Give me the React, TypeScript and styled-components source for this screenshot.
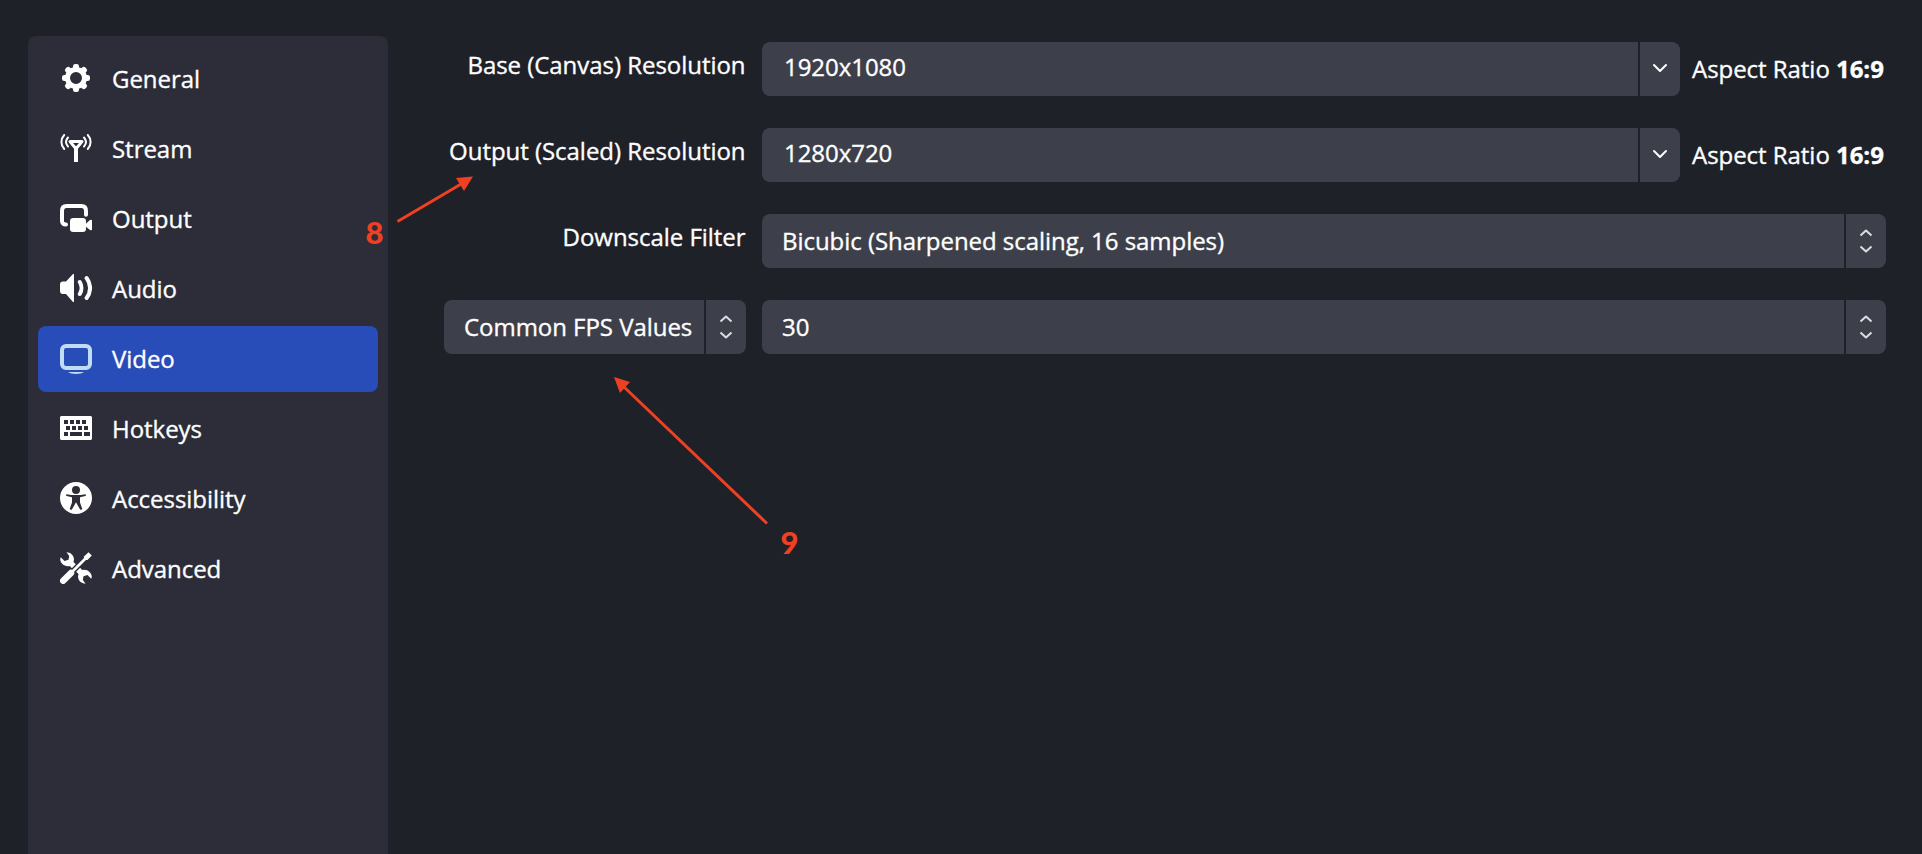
import React from "react";
import styled, { createGlobalStyle } from "styled-components";

const colors = {
  window: "#1f2129",
  panel: "#2c2d38",
  field: "#3d404a",
  selected: "#284cb8",
  text: "#fefefe",
  iconSelected: "#bfdcf2",
  mark: "#f04023",
};

const GlobalStyle = createGlobalStyle`
  * { box-sizing: border-box; }
  html, body { margin: 0; background: ${colors.window}; }
  body {
    overflow: hidden;
    color: ${colors.text};
    font-family: "Open Sans", "Noto Sans", sans-serif;
    font-size: 24px;
    line-height: 34px;
    letter-spacing: -0.04px;
    -webkit-text-stroke: 0.35px ${colors.text};
    white-space: nowrap;
  }
`;

const Window = styled.main`
  position: relative;
  display: flex;
  align-items: stretch;
  height: 854px;
  padding: 36px 36px 0 28px;
  overflow: hidden;
`;

const Sidebar = styled.nav`
  display: flex;
  flex-direction: column;
  gap: 4px;
  width: 360px;
  flex: none;
  padding: 10px;
  border-radius: 8px 8px 0 0;
  background: ${colors.panel};
`;

const NavItem = styled.a<{ $selected?: boolean }>`
  display: flex;
  align-items: center;
  gap: 20px;
  height: 66px;
  padding: 0 22px;
  border-radius: 8px;
  background: ${(p) => (p.$selected ? colors.selected : "transparent")};
`;

const NavIcon = styled.svg<{ $selected?: boolean }>`
  width: 32px;
  height: 32px;
  flex: none;
  margin-bottom: 2px;
  color: ${(p) => (p.$selected ? colors.iconSelected : colors.text)};
`;

const Form = styled.section`
  display: flex;
  flex-direction: column;
  gap: 32px;
  flex: 1;
  padding: 6px 0 0 56px;
`;

const Row = styled.div`
  display: flex;
  height: 54px;
`;

const LabelCell = styled.div`
  display: flex;
  justify-content: flex-end;
  width: 302px;
  margin-right: 16px;
  flex: none;
`;

const Label = styled.label`
  padding: 6px 0.5px 0 0;
`;

const Combo = styled.div`
  display: flex;
  gap: 2px;
  flex: 1;
`;

const Value = styled.div<{ $editable?: boolean }>`
  flex: 1;
  padding: ${(p) => (p.$editable ? "8px 0 0 22px" : "10px 0 0 20px")};
  border-radius: 8px 0 0 8px;
  background: ${colors.field};
`;

const ComboButton = styled.div`
  display: flex;
  align-items: center;
  justify-content: center;
  width: 40px;
  border-radius: 0 8px 8px 0;
  background: ${colors.field};
`;

const AspectRatio = styled.div`
  width: 206px;
  padding: 10px 0 0 12px;
  flex: none;
`;

const Marks = styled.svg`
  position: absolute;
  inset: 0;
  width: 1922px;
  height: 854px;
  pointer-events: none;
`;

const MarkNumber = styled.text`
  fill: ${colors.mark};
  font-family: Lato, sans-serif;
  font-size: 31px;
  font-weight: 900;
  -webkit-text-stroke: 0.5px ${colors.mark};
`;

const GearIcon = () => (
  <g fill="currentColor">
    <path
      fillRule="evenodd"
      d="M16 5a11 11 0 1 0 0 22a11 11 0 1 0 0-22zM16 10a6 6 0 1 1 0 12a6 6 0 1 1 0-12z"
    />
    {[0, 45, 90, 135, 180, 225, 270, 315].map((a) => (
      <rect key={a} x="13" y="2" width="6" height="6.5" rx="2.3" transform={`rotate(${a} 16 16)`} />
    ))}
  </g>
);

const AntennaIcon = () => (
  <g fill="none" stroke="currentColor">
    <path d="M10 9.6h12L16 16.8z" strokeWidth="3" strokeLinejoin="round" />
    <path d="M16 16v14" strokeWidth="4" />
    <path
      d="M4.2 3C.5 7 .5 13 4.2 17M8 5.5c-2.500 2.800-2.500 6.200 0 9M27.800 3c3.700 4 3.700 10 0 14M24 5.500c2.500 2.800 2.500 6.200 0 9"
      strokeWidth="2"
      strokeLinecap="round"
    />
  </g>
);

const OutputIcon = () => (
  <g transform="translate(0 2)">
    <path
      d="M6 20.500C3.200 20.500 2 19 2 17V7c0-3 1.500-5 4.500-5h15C24.500 2 26 4 26 7v3.800"
      fill="none"
      stroke="currentColor"
      strokeWidth="4"
      strokeLinecap="round"
    />
    <rect x="10" y="14" width="16" height="14" rx="3.200" fill="currentColor" />
    <path d="M25 20.500l5-4.500q2-.8 2 1v8q0 1.800-2 1l-5-4z" fill="currentColor" />
  </g>
);

const AudioIcon = () => (
  <g>
    <path d="M3 9.500h3L13 2h1v28h-1L6 22H3q-3 0-3-3v-6.500q0-3 3-3z" fill="currentColor" />
    <path
      d="M19.800 10c2.200 3.500 2.200 8.500 0 12M26.600 6c4.600 6 4.600 14 0 20"
      fill="none"
      stroke="currentColor"
      strokeWidth="4"
      strokeLinecap="round"
    />
  </g>
);

const DisplayIcon = () => (
  <g>
    <rect x="2" y="4" width="28" height="22" rx="4" fill="none" stroke="currentColor" strokeWidth="4" />
    <path d="M8 30h16c-3 2.600-13 2.600-16 0z" fill="currentColor" />
  </g>
);

const KeyboardIcon = () => (
  <path
    fill="currentColor"
    fillRule="evenodd"
    d="M1 4h30l1 1v22l-1 1H1l-1-1V5z
      M4 8v4h4V8zM10 8v4h4V8zM16 8v4h4V8zM22 8v4h4V8z
      M6 14v4h4v-4zM12 14v4h4v-4zM18 14v4h4v-4zM24 14v4h4v-4z
      M4 20v4h4v-4zM10 20v4h12v-4zM24 20v4h6v-4z"
  />
);

const PersonIcon = () => (
  <g>
    <circle cx="16" cy="16" r="16" fill="currentColor" />
    <circle cx="16" cy="8" r="4" fill={colors.panel} />
    <path
      d="M6.500 12.200Q16 14 25.500 12.200q1 1.300-.2 1.700L20 15.200v5.300l2.300 6.500q-1 1.400-2.200.4L16 20.200l-4.100 7.200q-1.200 1-2.200-.4l2.300-6.500v-5.300l-5.300-1.300q-1.200-.4-.2-1.700z"
      fill={colors.panel}
    />
  </g>
);

const ToolsIcon = () => (
  <g>
    <path
      d="M6.500.3C10 .2 14 3 14 7.400L13.500 10l4.500 4.500-4 4-4.200-4.600C5 15.200.2 11.500.2 7l.6-1.700L4.500 9l4-1.200L9.200 4z"
      fill="currentColor"
    />
    <path
      d="M25.500 31.700C22 31.800 18 29 18 24.600l.5-2.600-4.500-4.500 4-4 4.200 4.600c4.800-1.300 9.600 2.400 9.600 6.900l-.6 1.700-3.700-3.700-4 1.200-.7 3.800z"
      fill="currentColor"
    />
    <path d="M3.500 28.500L14 18 27 5" stroke={colors.panel} strokeWidth="5.500" fill="none" />
    <path d="M11 21L27 5" stroke="currentColor" strokeWidth="2.600" fill="none" />
    <path d="M3.200 28.800L11 21" stroke="currentColor" strokeWidth="6.400" strokeLinecap="round" />
    <path d="M24 4.500L28.500.2l3.300 3.300L27.500 8h-2.800l-.9-.8z" fill="currentColor" />
  </g>
);

const NAV: { label: string; Icon: React.FC; selected?: boolean }[] = [
  { label: "General", Icon: GearIcon },
  { label: "Stream", Icon: AntennaIcon },
  { label: "Output", Icon: OutputIcon },
  { label: "Audio", Icon: AudioIcon },
  { label: "Video", Icon: DisplayIcon, selected: true },
  { label: "Hotkeys", Icon: KeyboardIcon },
  { label: "Accessibility", Icon: PersonIcon },
  { label: "Advanced", Icon: ToolsIcon },
];

const DropdownArrow = () => (
  <svg width="16" height="54" viewBox="0 0 16 54" fill="none" stroke={colors.text} strokeWidth="2">
    <path d="M2 23l6 6 6-6" strokeLinecap="round" strokeLinejoin="round" />
  </svg>
);

const StepArrows = () => (
  <svg width="16" height="54" viewBox="0 0 16 54" fill="none" stroke="#dcdde0" strokeWidth="2">
    <path d="M2.500 21.500L8 16.500l5.500 5M2.500 32.500l5.500 5 5.500-5" strokeLinejoin="round" />
  </svg>
);

const Select = ({ value, editable }: { value: string; editable?: boolean }) => (
  <Combo>
    <Value $editable={editable}>{value}</Value>
    <ComboButton>{editable ? <DropdownArrow /> : <StepArrows />}</ComboButton>
  </Combo>
);

const ResolutionRow = ({ label, value }: { label: string; value: string }) => (
  <Row>
    <LabelCell>
      <Label>{label}</Label>
    </LabelCell>
    <Select value={value} editable />
    <AspectRatio>
      Aspect Ratio <b>16:9</b>
    </AspectRatio>
  </Row>
);

export default function App() {
  return (
    <Window>
      <GlobalStyle />
      <Sidebar>
        {NAV.map(({ label, Icon, selected }) => (
          <NavItem key={label} $selected={selected}>
            <NavIcon viewBox="0 0 32 32" $selected={selected}>
              <Icon />
            </NavIcon>
            {label}
          </NavItem>
        ))}
      </Sidebar>
      <Form>
        <ResolutionRow label="Base (Canvas) Resolution" value="1920x1080" />
        <ResolutionRow label="Output (Scaled) Resolution" value="1280x720" />
        <Row>
          <LabelCell>
            <Label>Downscale Filter</Label>
          </LabelCell>
          <Select value="Bicubic (Sharpened scaling, 16 samples)" />
        </Row>
        <Row>
          <LabelCell>
            <Select value="Common FPS Values" />
          </LabelCell>
          <Select value="30" />
        </Row>
      </Form>
      <Marks viewBox="0 0 1922 854">
        <g stroke={colors.mark} strokeWidth="3">
          <path d="M397.500 221.500L462 183.500M767 523.500L624 387" />
        </g>
        <g fill={colors.mark}>
          <path d="M473 176.500L456 178l8 13zM614 377l16 5-10 11z" />
        </g>
        <MarkNumber x="365.500" y="244">8</MarkNumber>
        <MarkNumber x="780.500" y="554">9</MarkNumber>
      </Marks>
    </Window>
  );
}
